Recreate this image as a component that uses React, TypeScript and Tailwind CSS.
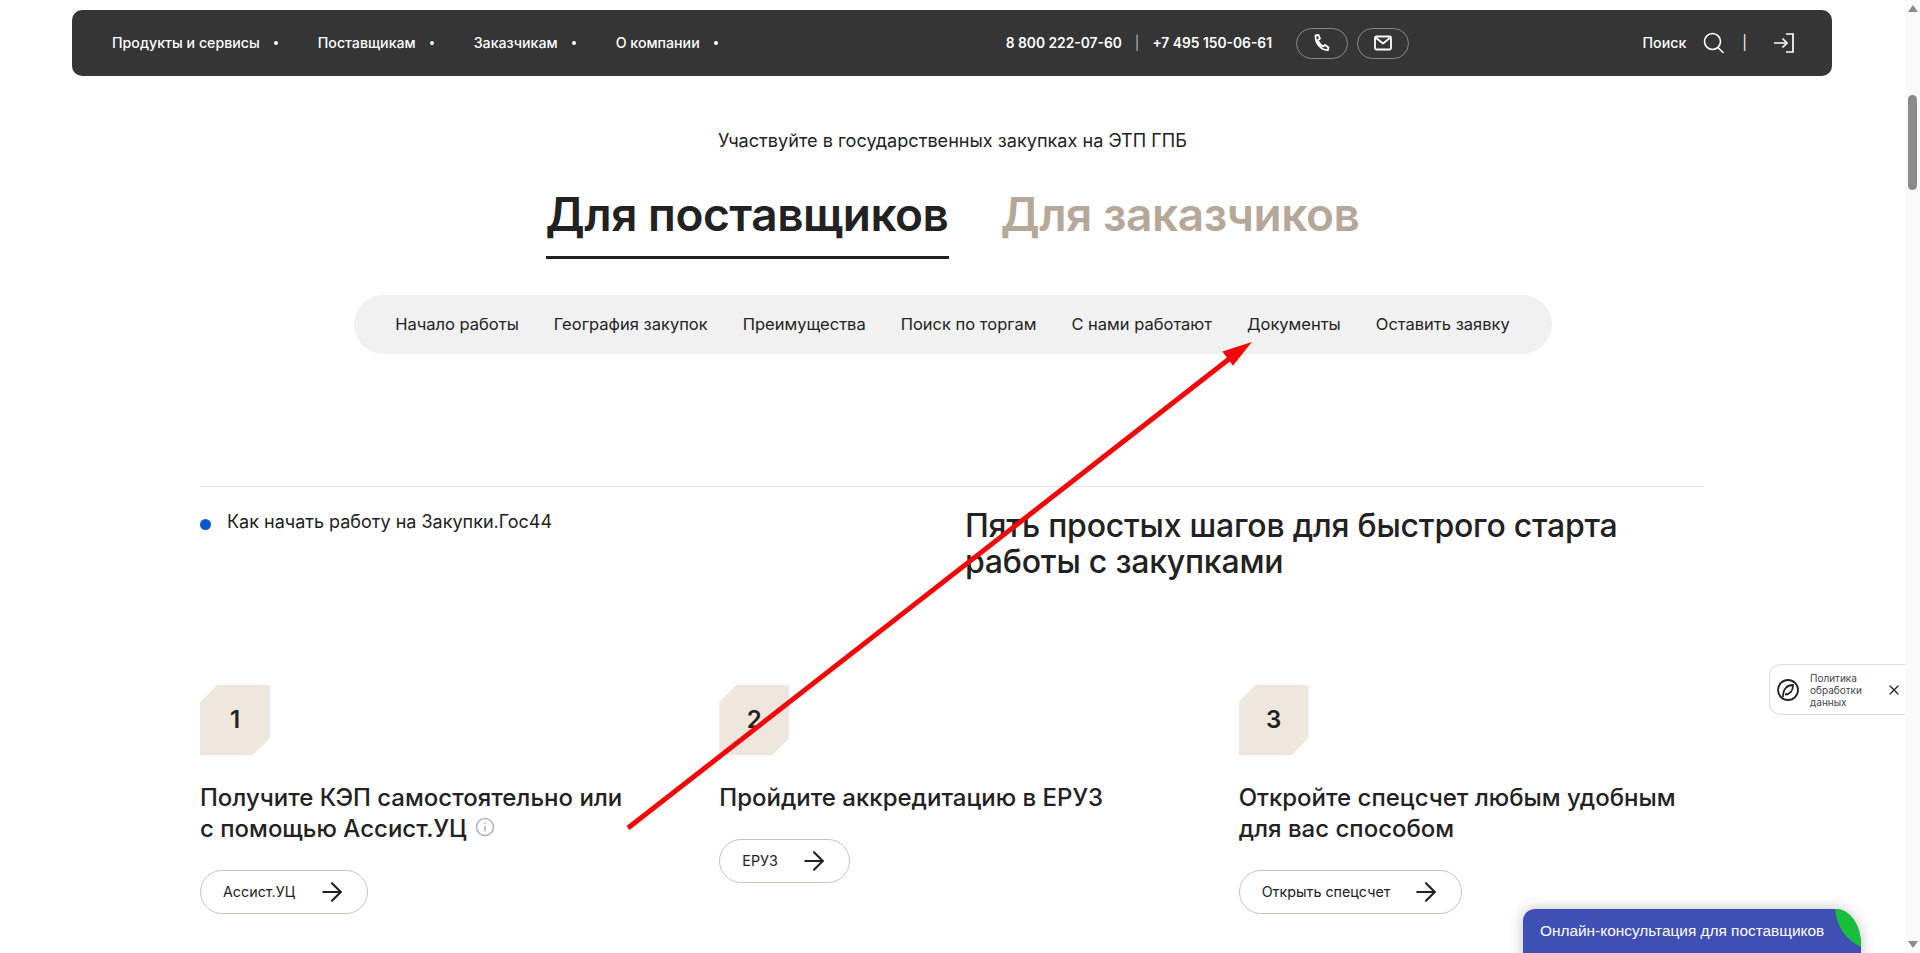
import { ArrowRight, X } from 'lucide-react'

const navItems = ['Продукты и сервисы', 'Поставщикам', 'Заказчикам', 'О компании']
const sectionLinks = ['Начало работы', 'География закупок', 'Преимущества', 'Поиск по торгам', 'С нами работают', 'Документы', 'Оставить заявку']

function StepTile({ n }: { n: number }) {
  return (
    <div className="w-[70px] h-[70px] bg-[#efe7dd] flex items-center justify-center text-[24px] font-semibold text-[#222] [clip-path:polygon(17px_0,100%_0,100%_53px,53px_100%,0_100%,0_17px)]">
      {n}
    </div>
  )
}

function OutlineButton({ label, width }: { label: string; width: string }) {
  return (
    <a className={`${width} h-[44px] rounded-full border border-[#cfc3b8] flex items-center justify-between pl-[22px] pr-[20px] text-[14.300px] text-[#222]`}>
      {label}
      <ArrowRight size={30} strokeWidth={1.7} />
    </a>
  )
}

export default function App() {
  return (
    <div className="relative flex h-[953px] overflow-hidden bg-white font-['Inter',sans-serif] text-[#222]">
      <main className="flex-1 min-w-0">
        <header className="mt-[10px] mx-[72px] mr-[73px] h-[66px] rounded-[10px] bg-[#353535] flex items-center pl-[40px] pr-[37px] text-white text-[14.200px]">
          <nav className="flex items-center gap-[40px]">
            {navItems.map((item) => (
              <span key={item} className="flex items-center gap-[14px] font-medium">
                {item}
                <span className="w-[4px] h-[4px] rounded-full bg-white" />
              </span>
            ))}
          </nav>
          <div className="ml-[288px] flex items-center font-semibold text-[13.800px]">
            <span>8 800 222-07-60</span>
            <span className="mx-[13px] font-normal text-[#bbb]">|</span>
            <span>+7 495 150-06-61</span>
          </div>
          <a className="ml-[24px] w-[52px] h-[31px] rounded-full border border-[#8a8a8a] flex items-center justify-center">
            <svg width="20" height="20" viewBox="0 0 20 20" fill="none" stroke="white" strokeWidth="1.8" strokeLinejoin="round">
              <path d="M3.500 2.500L6.500 2L8 5.500L6 7C6.500 9.500 8.500 12 11 13.500L13 12L16.500 14.500L16 17C9 17.500 3 10 3.500 2.500Z" />
            </svg>
          </a>
          <a className="ml-[9px] w-[52px] h-[31px] rounded-full border border-[#8a8a8a] flex items-center justify-center">
            <svg width="20" height="20" viewBox="0 0 20 20" fill="none" stroke="white" strokeWidth="1.8" strokeLinejoin="round">
              <rect x="2" y="3.500" width="16" height="13" rx="1.500" />
              <path d="M2.500 4.500L10 10.500L17.500 4.500" />
            </svg>
          </a>
          <div className="ml-auto flex items-center">
            <span className="font-medium">Поиск</span>
            <svg className="ml-[17px]" width="22" height="22" viewBox="0 0 22 22" fill="none" stroke="white" strokeWidth="1.6">
              <circle cx="9.500" cy="9.500" r="8" />
              <path d="M15 15.500L20.500 21" />
            </svg>
            <span className="ml-[17px]">|</span>
            <svg className="ml-[26px]" width="22" height="22" viewBox="0 0 22 22" fill="none" stroke="white" strokeWidth="1.7">
              <path d="M13 2H20V20H13" />
              <path d="M1 11H14M9.500 6.500L14 11L9.500 15.500" />
            </svg>
          </div>
        </header>

        <p className="mt-[52px] text-center text-[18.100px] leading-[24px]">
          Участвуйте в государственных закупках на ЭТП ГПБ
        </p>

        <div className="mt-[32px] flex justify-center gap-[52px] text-[46px] font-semibold leading-[60px] tracking-[-0.01em]">
          <div className="border-b-[3px] border-[#222] h-[75px]">Для поставщиков</div>
          <div className="text-[#b5a899]">Для заказчиков</div>
        </div>

        <div className="mx-auto mt-[36px] w-[1198px] h-[59px] rounded-full bg-[#f1f1f1] flex items-center justify-center gap-[35px] text-[16.500px]">
          {sectionLinks.map((link) => (
            <span key={link}>{link}</span>
          ))}
        </div>

        <section className="mx-[200px] mr-[201px] mt-[132px] border-t border-[#e8e0d4]">
          <div className="flex pt-[21px]">
            <div className="w-[765px] mt-[2px] flex items-start gap-[16px] text-[18px] leading-[24px]">
              <span className="mt-[9px] w-[11px] h-[11px] rounded-full bg-[#0b57d0]" />
              Как начать работу на Закупки.Гос44
            </div>
            <h2 className="text-[32px] leading-[36px] font-medium tracking-[-0.22px]">
              Пять простых шагов для быстрого старта<br />работы с закупками
            </h2>
          </div>

          <div className="mt-[105px] grid grid-cols-3 gap-[54px]">
            <div>
              <StepTile n={1} />
              <h3 className="mt-[27px] text-[24px] leading-[31px] font-medium">
                Получите КЭП самостоятельно или<br />с помощью Ассист.УЦ
                <svg className="inline-block ml-[8px] -mt-[6px]" width="20" height="20" viewBox="0 0 20 20" fill="none" stroke="#b4b4b4" strokeWidth="1.6">
                  <circle cx="10" cy="10" r="8.500" />
                  <path d="M10 9v5.500M10 5.500v1.500" />
                </svg>
              </h3>
              <div className="mt-[26px]"><OutlineButton label="Ассист.УЦ" width="w-[168px]" /></div>
            </div>
            <div>
              <StepTile n={2} />
              <h3 className="mt-[27px] text-[24px] leading-[31px] font-medium">Пройдите аккредитацию в ЕРУЗ</h3>
              <div className="mt-[26px]"><OutlineButton label="ЕРУЗ" width="w-[131px]" /></div>
            </div>
            <div>
              <StepTile n={3} />
              <h3 className="mt-[27px] text-[24px] leading-[31px] font-medium">
                Откройте спецсчет любым удобным<br />для вас способом
              </h3>
              <div className="mt-[26px]"><OutlineButton label="Открыть спецсчет" width="w-[223px]" /></div>
            </div>
          </div>
        </section>
      </main>

      <aside className="w-[15px] shrink-0 bg-[#fafafa] flex flex-col items-center justify-between py-[5px]">
        <svg width="10" height="7" viewBox="0 0 10 7"><path d="M5 0l5 7H0z" fill="#8a8a8a" /></svg>
        <svg width="10" height="7" viewBox="0 0 10 7"><path d="M5 7l5-7H0z" fill="#8a8a8a" /></svg>
      </aside>
      <div className="absolute right-[3px] top-[95px] w-[9px] h-[95px] rounded-full bg-[#8a8a8a]" />

      <div className="absolute left-[1769px] top-[664px] w-[136px] h-[51px] rounded-l-[12px] border border-r-0 border-[#dedede] bg-white flex items-center pl-[6px] text-[10px] leading-[12px] text-[#444]">
        <svg width="24" height="24" viewBox="0 0 24 24" fill="none" stroke="#222" strokeWidth="1.8" className="shrink-0">
          <circle cx="12" cy="12" r="10" />
          <path d="M7 19c0-8 4-12 10-12 0 6-3 9.500-8 9.500" />
        </svg>
        <span className="ml-[10px] w-[62px]">Политика обработки данных</span>
        <X size={16} strokeWidth={1.8} className="ml-[14px] text-[#222]" />
      </div>

      <div className="absolute left-[1523px] top-[909px] w-[338px] h-[60px] rounded-tl-[12px] rounded-tr-[25px_36px] bg-[#3f4fb3] shadow-[0_0_14px_rgba(0,0,0,0.25)] overflow-hidden pl-[17px] pt-[10px] text-[15.400px] leading-[24px] text-white font-['Liberation_Sans',sans-serif]">
        Онлайн-консультация для поставщиков
        <svg className="absolute right-0 top-0" width="26" height="38" viewBox="0 0 26 38"><path d="M0 0C2 18 10 30 26 38V0Z" fill="#18bf3d" /></svg>
      </div>

      <svg className="absolute inset-0 pointer-events-none" width="1920" height="953" viewBox="0 0 1920 953" fill="none">
        <path d="M628 828L1238 352" stroke="#f00808" strokeWidth="5" />
        <path d="M1249 344L1224 352L1233 364Z" fill="#f00808" stroke="#f00808" strokeWidth="2" />
      </svg>
    </div>
  )
}
